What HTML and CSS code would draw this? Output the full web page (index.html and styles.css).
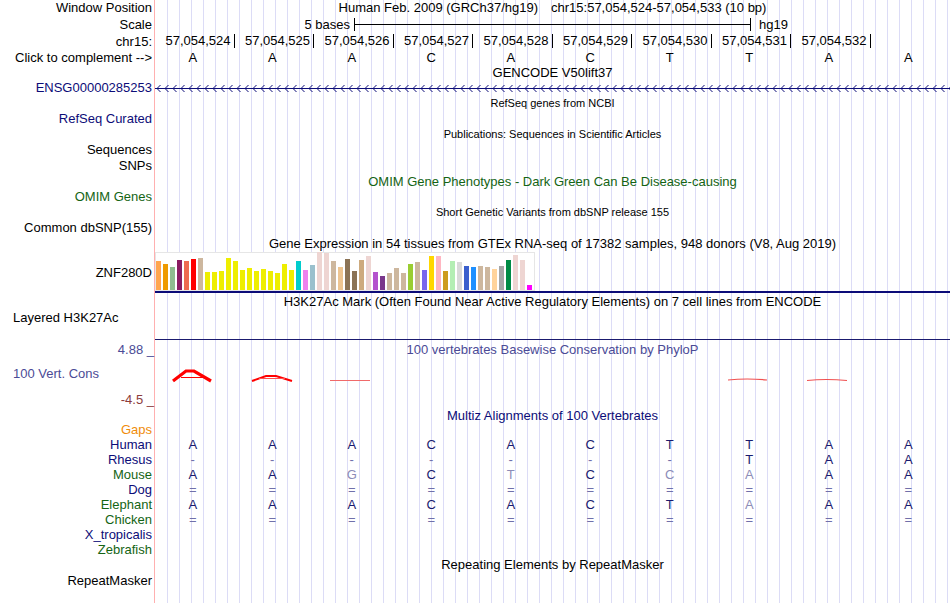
FILE: index.html
```html
<!DOCTYPE html>
<html lang="en">
<head>
  <meta charset="UTF-8">
  <title>UCSC Genome Browser on Human Feb. 2009 (GRCh37/hg19)</title>
  <link rel="stylesheet" href="styles.css">
</head>
<body>
  <div id="browser">
    <div class="row h16">
      <div class="label">Window Position</div>
      <div class="track center"><span>Human Feb. 2009 (GRCh37/hg19)</span><span class="pos">chr15:57,054,524-57,054,533 (10 bp)</span></div>
    </div>
    <div class="row h17">
      <div class="label">Scale</div>
      <div class="track scale">
        <span class="scale-text">5 bases</span>
        <div class="scale-bar"></div>
        <span class="scale-db">hg19</span>
      </div>
    </div>
    <div class="row h17">
      <div class="label">chr15:</div>
      <div class="track cols ruler">
        <div>57,054,524</div><div>57,054,525</div><div>57,054,526</div><div>57,054,527</div><div>57,054,528</div>
        <div>57,054,529</div><div>57,054,530</div><div>57,054,531</div><div>57,054,532</div><div></div>
      </div>
    </div>
    <div class="row h15">
      <div class="label">Click to complement --&gt;</div>
      <div class="track cols bases"><div>A</div><div>A</div><div>A</div><div>C</div><div>A</div><div>C</div><div>T</div><div>T</div><div>A</div><div>A</div></div>
    </div>
    <div class="row h16">
      <div class="label"></div>
      <div class="track center">GENCODE V50lift37</div>
    </div>
    <div class="row h14">
      <div class="label navy">ENSG00000285253</div>
      <div class="track">
        <svg class="gene" width="795" height="14" viewBox="0 0 795 14">
          <defs>
            <pattern id="chev" width="8" height="14" patternUnits="userSpaceOnUse">
              <path d="M5.5 4 L2 7.5 L5.5 11" fill="none" stroke="#0c0c78" stroke-width="1"/>
            </pattern>
          </defs>
          <rect x="0" y="0" width="795" height="14" fill="url(#chev)"/>
          <rect x="0" y="7" width="795" height="1" fill="#0c0c78"/>
        </svg>
      </div>
    </div>
    <div class="row h16">
      <div class="label"></div>
      <div class="track center small">RefSeq genes from NCBI</div>
    </div>
    <div class="row h15">
      <div class="label navy">RefSeq Curated</div>
      <div class="track"></div>
    </div>
    <div class="row h17">
      <div class="label"></div>
      <div class="track center small">Publications: Sequences in Scientific Articles</div>
    </div>
    <div class="row h14">
      <div class="label">Sequences</div>
      <div class="track"></div>
    </div>
    <div class="row h17">
      <div class="label">SNPs</div>
      <div class="track"></div>
    </div>
    <div class="row h15">
      <div class="label"></div>
      <div class="track center green">OMIM Gene Phenotypes - Dark Green Can Be Disease-causing</div>
    </div>
    <div class="row h15">
      <div class="label green">OMIM Genes</div>
      <div class="track"></div>
    </div>
    <div class="row h17">
      <div class="label"></div>
      <div class="track center small">Short Genetic Variants from dbSNP release 155</div>
    </div>
    <div class="row h14">
      <div class="label">Common dbSNP(155)</div>
      <div class="track"></div>
    </div>
    <div class="row h17">
      <div class="label"></div>
      <div class="track center">Gene Expression in 54 tissues from GTEx RNA-seq of 17382 samples, 948 donors (V8, Aug 2019)</div>
    </div>
    <div class="row h41">
      <div class="label">ZNF280D</div>
      <div class="track">
        <svg class="chart" width="795" height="41" viewBox="0 0 795 41">
          <rect x="0.5" y="0.5" width="379" height="38" fill="#fff" stroke="#e6e6e6"/>
          <rect x="1" y="9" width="5" height="29" fill="#ffa54f"/>
          <rect x="8" y="12" width="5" height="26" fill="#ee9a00"/>
          <rect x="15" y="15" width="5" height="23" fill="#8fbc8f"/>
          <rect x="22" y="8" width="5" height="30" fill="#8b1c62"/>
          <rect x="29" y="9" width="5" height="29" fill="#ee6a50"/>
          <rect x="36" y="7" width="5" height="31" fill="#ff0000"/>
          <rect x="43" y="6" width="5" height="32" fill="#cdb79e"/>
          <rect x="50" y="20" width="5" height="18" fill="#eeee00"/>
          <rect x="57" y="20" width="5" height="18" fill="#eeee00"/>
          <rect x="64" y="19" width="5" height="19" fill="#eeee00"/>
          <rect x="71" y="6" width="5" height="32" fill="#eeee00"/>
          <rect x="78" y="9" width="5" height="29" fill="#eeee00"/>
          <rect x="85" y="18" width="5" height="20" fill="#eeee00"/>
          <rect x="92" y="16" width="5" height="22" fill="#eeee00"/>
          <rect x="99" y="19" width="5" height="19" fill="#eeee00"/>
          <rect x="106" y="17" width="5" height="21" fill="#eeee00"/>
          <rect x="113" y="19" width="5" height="19" fill="#eeee00"/>
          <rect x="120" y="21" width="5" height="17" fill="#eeee00"/>
          <rect x="127" y="12" width="5" height="26" fill="#eeee00"/>
          <rect x="134" y="18" width="5" height="20" fill="#eeee00"/>
          <rect x="141" y="9" width="5" height="29" fill="#00cdcd"/>
          <rect x="148" y="18" width="5" height="20" fill="#ee82ee"/>
          <rect x="155" y="13" width="5" height="25" fill="#9ac0cd"/>
          <rect x="162" y="0" width="5" height="38" fill="#eed5d2"/>
          <rect x="169" y="1" width="5" height="37" fill="#eed5d2"/>
          <rect x="176" y="9" width="5" height="29" fill="#cdb79e"/>
          <rect x="183" y="15" width="5" height="23" fill="#eec591"/>
          <rect x="190" y="7" width="5" height="31" fill="#8b7355"/>
          <rect x="197" y="19" width="5" height="19" fill="#8b7355"/>
          <rect x="204" y="8" width="5" height="30" fill="#cdaa7d"/>
          <rect x="211" y="4" width="5" height="34" fill="#eed5d2"/>
          <rect x="218" y="20" width="5" height="18" fill="#b452cd"/>
          <rect x="225" y="24" width="5" height="14" fill="#7a378b"/>
          <rect x="232" y="21" width="5" height="17" fill="#cdb79e"/>
          <rect x="239" y="16" width="5" height="22" fill="#cdb79e"/>
          <rect x="246" y="21" width="5" height="17" fill="#cdb79e"/>
          <rect x="253" y="12" width="5" height="26" fill="#9acd32"/>
          <rect x="260" y="10" width="5" height="28" fill="#cdb79e"/>
          <rect x="267" y="18" width="5" height="20" fill="#7a67ee"/>
          <rect x="274" y="4" width="5" height="34" fill="#ffd700"/>
          <rect x="281" y="4" width="5" height="34" fill="#ffb6c1"/>
          <rect x="288" y="19" width="5" height="19" fill="#cd9b1d"/>
          <rect x="295" y="9" width="5" height="29" fill="#b4eeb4"/>
          <rect x="302" y="10" width="5" height="28" fill="#d9d9d9"/>
          <rect x="309" y="14" width="5" height="24" fill="#3a5fcd"/>
          <rect x="316" y="15" width="5" height="23" fill="#1e90ff"/>
          <rect x="323" y="14" width="5" height="24" fill="#cdb79e"/>
          <rect x="330" y="15" width="5" height="23" fill="#cdb79e"/>
          <rect x="337" y="17" width="5" height="21" fill="#ffd39b"/>
          <rect x="344" y="14" width="5" height="24" fill="#a6a6a6"/>
          <rect x="351" y="8" width="5" height="30" fill="#008b45"/>
          <rect x="358" y="3" width="5" height="35" fill="#eed5d2"/>
          <rect x="365" y="8" width="5" height="30" fill="#eed5d2"/>
          <rect x="372" y="33" width="5" height="5" fill="#ff00ff"/>
          <rect x="0" y="39" width="795" height="2" fill="#0c0c78"/>
        </svg>
      </div>
    </div>
    <div class="row h18">
      <div class="label"></div>
      <div class="track center">H3K27Ac Mark (Often Found Near Active Regulatory Elements) on 7 cell lines from ENCODE</div>
    </div>
    <div class="row h28">
      <div class="label left top14">Layered H3K27Ac</div>
      <div class="track"></div>
    </div>
    <div class="row phylop">
      <div class="axis">
        <div class="axis-top">4.88 _</div>
        <div class="axis-name">100 Vert. Cons</div>
        <div class="axis-bot">-4.5 _</div>
      </div>
      <div class="track phylop-track">
        <div class="phylop-title">100 vertebrates Basewise Conservation by PhyloP</div>
        <svg class="wiggle" width="795" height="48" viewBox="0 0 795 48">
          <path d="M18 21 L31 11 L39 11 L56 21" fill="none" stroke="#ff0000" stroke-width="3.2" stroke-linejoin="miter"/>
          <path d="M26 17.5 H48" stroke="#ff0000" stroke-width="1"/>
          <path d="M97 21 L111 16 L121 16 L137 21" fill="none" stroke="#ff0000" stroke-width="2"/>
          <path d="M104 18.5 H130" stroke="#ff5050" stroke-width="1"/>
          <path d="M175 20.5 H215" stroke="#f06a6a" stroke-width="1"/>
          <path d="M573 20 Q592 18 612 20" fill="none" stroke="#f05050" stroke-width="1.2"/>
          <path d="M652 20.5 Q671 18.5 692 20.5" fill="none" stroke="#f05050" stroke-width="1.2"/>
        </svg>
      </div>
    </div>
    <div class="row h15">
      <div class="label"></div>
      <div class="track center navy">Multiz Alignments of 100 Vertebrates</div>
    </div>
    <div class="row h14">
      <div class="label orange">Gaps</div>
      <div class="track"></div>
    </div>
    <div class="row h15">
      <div class="label navy">Human</div>
      <div class="track cols bases align"><div>A</div><div>A</div><div>A</div><div>C</div><div>A</div><div>C</div><div>T</div><div>T</div><div>A</div><div>A</div></div>
    </div>
    <div class="row h15">
      <div class="label navy">Rhesus</div>
      <div class="track cols bases align"><div class="gap">-</div><div class="gap">-</div><div class="gap">-</div><div class="gap">-</div><div class="gap">-</div><div class="gap">-</div><div class="gap">-</div><div>T</div><div>A</div><div>A</div></div>
    </div>
    <div class="row h15">
      <div class="label green">Mouse</div>
      <div class="track cols bases align"><div>A</div><div>A</div><div class="faint">G</div><div>C</div><div class="faint">T</div><div>C</div><div class="faint">C</div><div class="faint">A</div><div>A</div><div>A</div></div>
    </div>
    <div class="row h15">
      <div class="label navy">Dog</div>
      <div class="track cols bases align"><div class="gap">=</div><div class="gap">=</div><div class="gap">=</div><div class="gap">=</div><div class="gap">=</div><div class="gap">=</div><div class="gap">=</div><div class="gap">=</div><div class="gap">=</div><div class="gap">=</div></div>
    </div>
    <div class="row h15">
      <div class="label green">Elephant</div>
      <div class="track cols bases align"><div>A</div><div>A</div><div>A</div><div>C</div><div>A</div><div>C</div><div>T</div><div class="faint">A</div><div>A</div><div>A</div></div>
    </div>
    <div class="row h15">
      <div class="label green">Chicken</div>
      <div class="track cols bases align"><div class="gap">=</div><div class="gap">=</div><div class="gap">=</div><div class="gap">=</div><div class="gap">=</div><div class="gap">=</div><div class="gap">=</div><div class="gap">=</div><div class="gap">=</div><div class="gap">=</div></div>
    </div>
    <div class="row h15">
      <div class="label navy">X_tropicalis</div>
      <div class="track"></div>
    </div>
    <div class="row h15">
      <div class="label green">Zebrafish</div>
      <div class="track"></div>
    </div>
    <div class="row h16">
      <div class="label"></div>
      <div class="track center">Repeating Elements by RepeatMasker</div>
    </div>
    <div class="row h15">
      <div class="label">RepeatMasker</div>
      <div class="track"></div>
    </div>
  </div>
</body>
</html>
```

FILE: styles.css
```css
* {
  box-sizing: border-box;
}
body {
  margin: 0;
  background: #fff;
  color: #000;
  font-family: "Liberation Sans", Arial, sans-serif;
  font-size: 13px;
}
#browser {
  width: 950px;
  height: 603px;
  overflow: hidden;
  /* pink divider + light blue base guidelines */
  background:
    linear-gradient(#ffb0b0, #ffb0b0) 154px 0 / 1px 100% no-repeat,
    repeating-linear-gradient(to right, transparent 0 11px, #dcdcf6 11px 12px) 156px 0 / 794px 100% no-repeat,
    #fff;
}
.row {
  display: grid;
  grid-template-columns: 155px 795px;
}
.h14 { height: 14px; line-height: 14px; }
.h15 { height: 15px; line-height: 15px; }
.h16 { height: 16px; line-height: 16px; }
.h17 { height: 17px; line-height: 17px; }
.h18 { height: 18px; line-height: 18px; }
.h28 { height: 28px; line-height: 28px; }
.h41 { height: 41px; line-height: 41px; }

.label {
  text-align: right;
  padding-right: 3px;
  white-space: nowrap;
}
.label.left {
  text-align: left;
  padding-left: 13px;
}
.top14 {
  line-height: 14px;
}
.track {
  white-space: nowrap;
}
.track svg {
  display: block;
}
.center {
  text-align: center;
}
.small {
  font-size: 11px;
}
.navy {
  color: #0c0c78;
}
.green {
  color: #146414;
}
.orange {
  color: #f08c0a;
}
.pos {
  margin-left: 13px;
}

/* scale bar */
.scale {
  display: grid;
  grid-template-columns: 1fr 397px 1fr;
}
.scale-text {
  text-align: right;
  padding-right: 4px;
}
.scale-bar {
  height: 13px;
  margin-top: 2px;
  border-left: 1px solid #000;
  border-right: 1px solid #000;
  background: linear-gradient(#000, #000) 0 6px / 100% 1px no-repeat;
}
.scale-db {
  padding-left: 8px;
}

/* one column per base */
.cols {
  display: grid;
  grid-template-columns: repeat(10, 79.5px);
  text-align: center;
}
.bases > div {
  padding-right: 4px;
}
.ruler > div {
  height: 14px;
  margin-top: 1px;
  line-height: 14px;
  text-align: right;
  padding-right: 3px;
  border-right: 1px solid #000;
}
.ruler > div:last-child {
  border-right: 0;
}

/* phyloP */
.phylop {
  height: 69px;
}
.axis {
  display: flex;
  flex-direction: column;
  color: #4b4b96;
}
.axis-top {
  height: 21px;
  line-height: 21px;
  text-align: right;
  padding-right: 1px;
}
.axis-name {
  height: 27px;
  line-height: 27px;
  padding-left: 13px;
}
.axis-bot {
  height: 21px;
  padding-top: 5px;
  line-height: 15px;
  text-align: right;
  padding-right: 1px;
  color: #8c3c3c;
}
.phylop-track {
  border-top: 1px solid #1a1a6e;
}
.phylop-title {
  height: 20px;
  line-height: 20px;
  text-align: center;
  color: #4b4b96;
}

/* multiz */
.align {
  color: #1a1a6e;
}
.align .faint {
  color: #8c8cb8;
}
.align .gap {
  color: #7070aa;
}
```
